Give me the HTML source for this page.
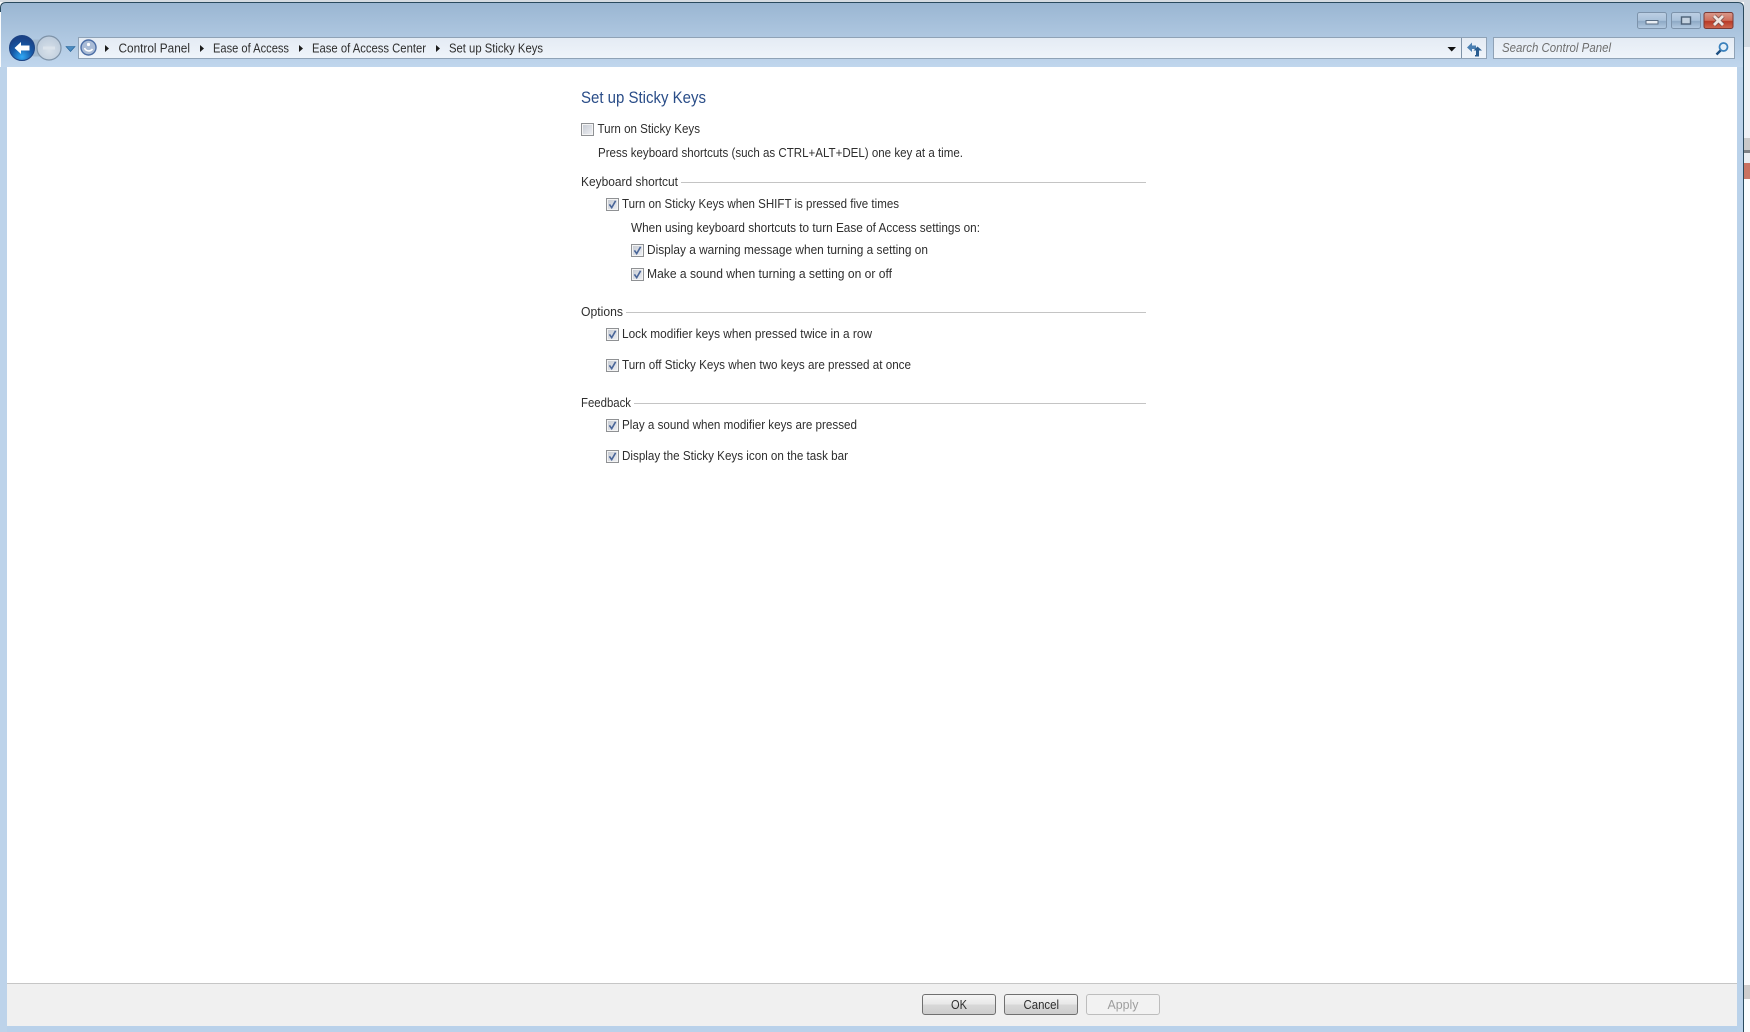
<!DOCTYPE html>
<html><head><meta charset="utf-8"><title>Set up Sticky Keys</title>
<style>
html,body{margin:0;padding:0;width:1750px;height:1032px;overflow:hidden;background:#fff}
svg{display:block}
text{font-family:"Liberation Sans",sans-serif;font-size:13px;fill:#2e2e2e}
</style></head><body>
<svg width="1750" height="1032" viewBox="0 0 1750 1032" xmlns="http://www.w3.org/2000/svg">
<defs>
<linearGradient id="fr" gradientUnits="userSpaceOnUse" x1="0" y1="3" x2="0" y2="67"><stop offset="0" stop-color="#9ab6d2"/><stop offset="1" stop-color="#c0d6ed"/></linearGradient>
<linearGradient id="bar" x1="0" y1="0" x2="0" y2="1"><stop offset="0" stop-color="#e4ebf4"/><stop offset="1" stop-color="#eff4fa"/></linearGradient>
<linearGradient id="btn" x1="0" y1="0" x2="0" y2="1"><stop offset="0" stop-color="#f6f6f6"/><stop offset=".48" stop-color="#e8e8e8"/><stop offset=".52" stop-color="#d8d8d8"/><stop offset="1" stop-color="#cdcdcd"/></linearGradient>
<linearGradient id="wb" x1="0" y1="0" x2="0" y2="1"><stop offset="0" stop-color="#bdd0e4"/><stop offset=".5" stop-color="#a9c1da"/><stop offset=".55" stop-color="#8ea9c5"/><stop offset="1" stop-color="#b4cbe2"/></linearGradient>
<linearGradient id="cl" x1="0" y1="0" x2="0" y2="1"><stop offset="0" stop-color="#d99a8c"/><stop offset=".5" stop-color="#cf6f5c"/><stop offset=".55" stop-color="#b93a26"/><stop offset="1" stop-color="#cf6a52"/></linearGradient>
<radialGradient id="bk" cx=".5" cy=".85" r=".75"><stop offset="0" stop-color="#30a8f4"/><stop offset=".55" stop-color="#1658a6"/><stop offset="1" stop-color="#1a4286"/></radialGradient>
<radialGradient id="fw" cx=".5" cy=".6" r=".6"><stop offset="0" stop-color="#d8e1ea"/><stop offset="1" stop-color="#bccbdb"/></radialGradient>
<linearGradient id="cb" x1="0" y1="0" x2="1" y2="1"><stop offset="0" stop-color="#c8ccd4"/><stop offset="1" stop-color="#eceef2"/></linearGradient>
<g id="chk"><rect x=".5" y=".5" width="12" height="12" fill="#f4f4f4" stroke="#8f9194"/><rect x="2" y="2" width="9" height="9" fill="url(#cb)"/><path d="M3.4 6.4 L5.7 9.6 L9.6 2.8" fill="none" stroke="#4a6699" stroke-width="1.6"/></g>
<g id="unc"><rect x=".5" y=".5" width="12" height="12" fill="#f4f4f4" stroke="#8f9194"/><rect x="2" y="2" width="9" height="9" fill="url(#cb)"/></g>
</defs>

<!-- outside background -->
<rect width="1750" height="1032" fill="#fbfcfd"/>
<rect width="1750" height="2" fill="#d5dbe1"/>
<rect x="1744" y="0" width="6" height="47" fill="#d2dae2"/>
<rect x="1744" y="47" width="6" height="91" fill="#eef1f5"/>
<rect x="1744" y="138" width="6" height="12" fill="#c9c9c9"/>
<rect x="1744" y="150" width="6" height="3" fill="#7d8185"/>
<rect x="1744" y="153" width="6" height="10" fill="#e9edf1"/>
<rect x="1744" y="163" width="6" height="16" fill="#c9705f"/>
<rect x="1744" y="985" width="6" height="14" fill="#cfcfcf"/>

<!-- window frame -->
<path d="M1 70V8Q1 3 6 3H1738Q1743 3 1743 8V70Z" fill="url(#fr)"/>
<rect x="0" y="67" width="7" height="965" fill="#bdd3ea"/>
<rect x="1737" y="67" width="6" height="965" fill="#bad2ea"/>
<rect x="7" y="1026" width="1730" height="6" fill="#b9d1ea"/>
<path d="M.5 12V8Q.5 2.5 6 2.5H1738Q1743.5 2.5 1743.5 8V1032" fill="none" stroke="#2a4a5e" stroke-width="1"/>

<!-- content -->
<rect x="7" y="67" width="1730" height="959" fill="#fff"/>
<rect x="7" y="983" width="1730" height="43" fill="#f0f0f0"/>
<rect x="7" y="983" width="1730" height="1" fill="#c6c6c6"/>

<!-- window buttons -->
<rect x="1637.5" y="12.5" width="29" height="16" rx="2" fill="url(#wb)" stroke="#7d93ab"/>
<rect x="1646" y="20.5" width="12" height="3.5" fill="#e9eef4" stroke="#5a6e84"/>
<rect x="1671.5" y="12.5" width="29" height="16" rx="2" fill="url(#wb)" stroke="#7d93ab"/>
<rect x="1681.5" y="17" width="9" height="7" fill="#c4d2e0" stroke="#4c6076" stroke-width="1.4"/>
<rect x="1704" y="12.5" width="29" height="16" rx="2" fill="url(#cl)" stroke="#7a3a35"/>
<path d="M1714 16 L1723 25 M1723 16 L1714 25" stroke="#6e4a48" stroke-width="4.2"/>
<path d="M1714 16 L1723 25 M1723 16 L1714 25" stroke="#f0e6e2" stroke-width="2.8"/>

<!-- nav buttons -->
<rect x="26" y="39.5" width="32" height="17" rx="8.5" fill="#a3b9cf"/>
<circle cx="49" cy="48" r="12" fill="url(#fw)" stroke="#7f93a8" stroke-width="1.2"/>
<path d="M43 48H55" stroke="#dce4ec" stroke-width="3"/>
<circle cx="22" cy="48" r="12.5" fill="url(#bk)" stroke="#1c4384"/>
<path d="M14.5 48 L21 42 V45.5 H29.5 V50.5 H21 V54Z" fill="#fff"/>
<path d="M66 46.5H75L70.5 51.5Z" fill="#4a8cc2" stroke="#1f5e94" stroke-width=".6"/>

<!-- address bar -->
<rect x="78.5" y="37.5" width="1408" height="21" fill="url(#bar)" stroke="#8fa2b6"/>
<rect x="1461" y="38" width="1" height="20" fill="#7f93a8"/>
<circle cx="88.5" cy="47.5" r="7.5" fill="#a9bbd6" stroke="#4c6ea6" stroke-width="1.4"/>
<path d="M84.5 48a4.6 4.6 0 0 0 8 1" fill="none" stroke="#fff" stroke-width="1.6"/>
<circle cx="88.5" cy="44.5" r="1.6" fill="#fff"/>
<path d="M105 45 L109 48.5 L105 52Z M200 45 L204 48.5 L200 52Z M299 45 L303 48.5 L299 52Z M436 45 L440 48.5 L436 52Z" fill="#1b1b1b"/>
<text x="118.5" y="52.5" textLength="71.5" lengthAdjust="spacingAndGlyphs">Control Panel</text>
<text x="213" y="52.5" textLength="76" lengthAdjust="spacingAndGlyphs">Ease of Access</text>
<text x="312" y="52.5" textLength="114" lengthAdjust="spacingAndGlyphs">Ease of Access Center</text>
<text x="449" y="52.5" textLength="94" lengthAdjust="spacingAndGlyphs">Set up Sticky Keys</text>
<path d="M1447.5 47H1456L1451.7 51.5Z" fill="#111"/>
<!-- refresh -->
<path d="M1467 47.5 L1472 42.5 V45.5 H1476 V49 H1472 V52Z" fill="#4a7fb2"/>
<path d="M1482 50.5 L1477.5 46.5 L1473.5 50.5 H1476 V55 H1475 V56.5 H1479 V50.5Z" fill="#2a5d90"/>

<!-- search -->
<rect x="1493.5" y="37.5" width="241" height="21" fill="url(#bar)" stroke="#8fa2b6"/>
<text x="1502" y="52" textLength="109" lengthAdjust="spacingAndGlyphs" style="font-style:italic;fill:#6f6f6f">Search Control Panel</text>
<circle cx="1723.5" cy="47" r="4" fill="#e3eef8" stroke="#3a80bc" stroke-width="1.8"/>
<path d="M1720.5 50.5 L1716.5 54.5" stroke="#1d4f82" stroke-width="2.4"/>

<!-- heading -->
<text x="581" y="103" textLength="125" lengthAdjust="spacingAndGlyphs" style="font-size:16.5px;fill:#2a4d88">Set up Sticky Keys</text>
<use href="#unc" x="581" y="123"/>
<text x="597.5" y="133" textLength="102.5" lengthAdjust="spacingAndGlyphs">Turn on Sticky Keys</text>
<text x="598" y="157" textLength="365" lengthAdjust="spacingAndGlyphs">Press keyboard shortcuts (such as CTRL+ALT+DEL) one key at a time.</text>

<text x="581" y="186" textLength="97" lengthAdjust="spacingAndGlyphs">Keyboard shortcut</text>
<rect x="681" y="182" width="465" height="1" fill="#c4c4c4"/>
<use href="#chk" x="606" y="198"/>
<text x="622" y="208" textLength="277" lengthAdjust="spacingAndGlyphs">Turn on Sticky Keys when SHIFT is pressed five times</text>
<text x="631" y="232" textLength="349" lengthAdjust="spacingAndGlyphs">When using keyboard shortcuts to turn Ease of Access settings on:</text>
<use href="#chk" x="631" y="244"/>
<text x="647" y="254" textLength="281" lengthAdjust="spacingAndGlyphs">Display a warning message when turning a setting on</text>
<use href="#chk" x="631" y="268"/>
<text x="647" y="278" textLength="245" lengthAdjust="spacingAndGlyphs">Make a sound when turning a setting on or off</text>

<text x="581" y="316" textLength="42" lengthAdjust="spacingAndGlyphs">Options</text>
<rect x="626" y="312" width="520" height="1" fill="#c4c4c4"/>
<use href="#chk" x="606" y="328"/>
<text x="622" y="338" textLength="250" lengthAdjust="spacingAndGlyphs">Lock modifier keys when pressed twice in a row</text>
<use href="#chk" x="606" y="359"/>
<text x="622" y="369" textLength="289" lengthAdjust="spacingAndGlyphs">Turn off Sticky Keys when two keys are pressed at once</text>

<text x="581" y="407" textLength="50" lengthAdjust="spacingAndGlyphs">Feedback</text>
<rect x="634" y="403" width="512" height="1" fill="#c4c4c4"/>
<use href="#chk" x="606" y="419"/>
<text x="622" y="429" textLength="235" lengthAdjust="spacingAndGlyphs">Play a sound when modifier keys are pressed</text>
<use href="#chk" x="606" y="450"/>
<text x="622" y="460" textLength="226" lengthAdjust="spacingAndGlyphs">Display the Sticky Keys icon on the task bar</text>

<!-- footer buttons -->
<rect x="922.5" y="994.5" width="73" height="20" rx="2.5" fill="url(#btn)" stroke="#707070"/>
<text x="951" y="1009" textLength="16" lengthAdjust="spacingAndGlyphs">OK</text>
<rect x="1004.5" y="994.5" width="73" height="20" rx="2.5" fill="url(#btn)" stroke="#707070"/>
<text x="1023.5" y="1009" textLength="35.5" lengthAdjust="spacingAndGlyphs">Cancel</text>
<rect x="1086.5" y="994.5" width="73" height="20" rx="2.5" fill="#f2f2f2" stroke="#bdbdbd"/>
<text x="1107.5" y="1009" textLength="31" lengthAdjust="spacingAndGlyphs" style="fill:#9e9e9e">Apply</text>
</svg>
</body></html>
